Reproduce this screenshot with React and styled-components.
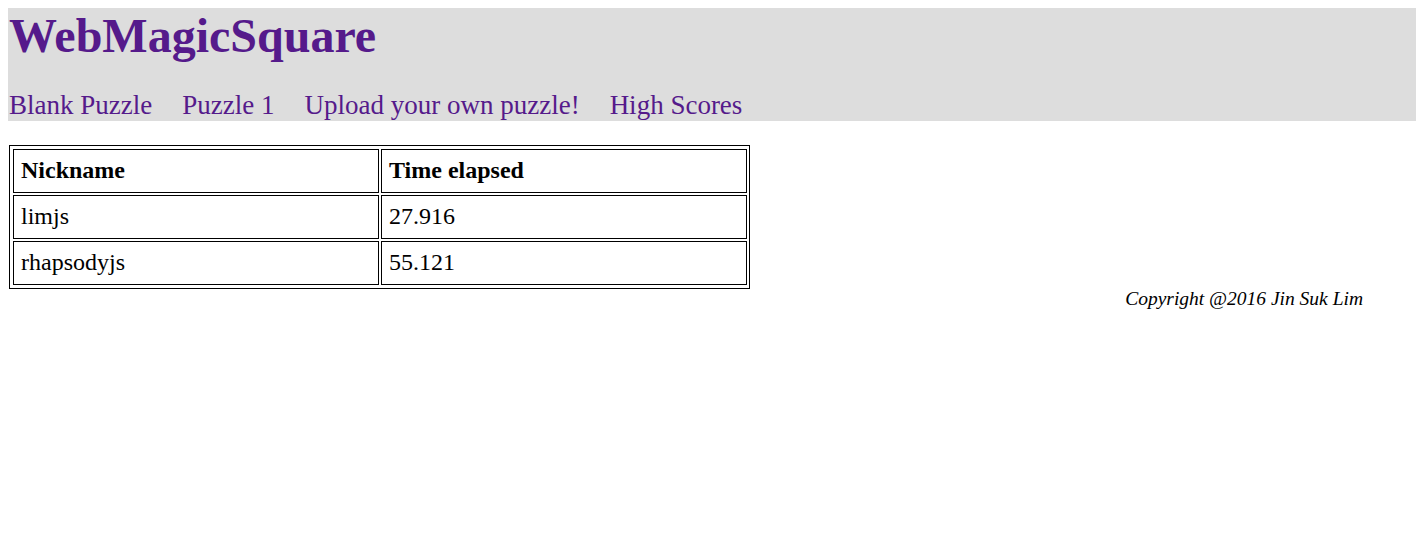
import React from "react";
import styled, { createGlobalStyle } from "styled-components";

const Global = createGlobalStyle`
  html, body {
    overflow-x: visible;
  }
  body {
    margin: 8px 0 8px 8px;
    font-family: "Liberation Serif", "Times New Roman", serif;
    background: #ffffff;
    color: #000000;
  }
`;

const Header = styled.header`
  background: #dddddd;
  box-sizing: border-box;
  padding-left: 1px;
  height: 113px;
  display: flex;
  flex-direction: column;
`;

const Title = styled.h1`
  margin: 0;
  font-size: 48px;
  font-weight: bold;
  line-height: 55px;
  color: #551a8b;
`;

const Nav = styled.nav`
  display: flex;
  margin-top: 27px;
  gap: 30px;
  font-size: 27px;
  line-height: 30px;
  white-space: nowrap;
`;

const NavLink = styled.a`
  color: #551a8b;
  text-decoration: none;
`;

const Table = styled.table`
  margin: 24px 0 0 1px;
  border: 1px solid #000;
  padding: 1px 0 1px 1px;
  border-spacing: 2px;
  table-layout: fixed;
  font-size: 24px;
`;

const Cell = styled.td`
  box-sizing: border-box;
  width: 366px;
  height: 44px;
  border: 1px solid #000;
  padding: 6px 7px 8px;
  line-height: 28px;
  text-align: left;
  font-weight: ${(p) => (p.$head ? "bold" : "normal")};
`;

const Footer = styled.footer`
  text-align: right;
  padding-right: 53px;
  font-style: italic;
  font-size: 19.5px;
  line-height: 22px;
  margin-top: -1px;
`;

const rows = [
  ["limjs", "27.916"],
  ["rhapsodyjs", "55.121"],
];

export default function App() {
  return (
    <>
      <Global />
      <Header>
        <Title>WebMagicSquare</Title>
        <Nav>
          <NavLink href="#">Blank Puzzle</NavLink>
          <NavLink href="#">Puzzle 1</NavLink>
          <NavLink href="#">Upload your own puzzle!</NavLink>
          <NavLink href="#">High Scores</NavLink>
        </Nav>
      </Header>
      <Table>
        <tbody>
          <tr>
            <Cell as="th" $head>Nickname</Cell>
            <Cell as="th" $head>Time elapsed</Cell>
          </tr>
          {rows.map(([n, t]) => (
            <tr key={n}>
              <Cell>{n}</Cell>
              <Cell>{t}</Cell>
            </tr>
          ))}
        </tbody>
      </Table>
      <Footer>Copyright @2016 Jin Suk Lim</Footer>
    </>
  );
}
